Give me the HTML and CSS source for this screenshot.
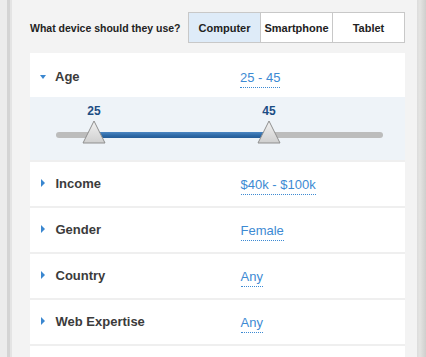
FILE: index.html
```html
<!DOCTYPE html>
<html>
<head>
<meta charset="utf-8">
<link rel="stylesheet" href="styles.css">
</head>
<body>
<div class="page">
  <div class="gutter-left"></div>
  <div class="main">
    <div class="device">
      <span class="device-label">What device should they use?</span>
      <div class="seg">
        <span class="seg-btn active">Computer</span>
        <span class="seg-btn">Smartphone</span>
        <span class="seg-btn">Tablet</span>
      </div>
    </div>
    <div class="panel">
      <div class="row open">
        <span class="caret down"></span>
        <span class="row-label">Age</span>
        <span class="row-value">25 - 45</span>
      </div>
      <div class="slider">
        <div class="track">
          <div class="fill" style="left:38px;width:175px"></div>
          <div class="handle" style="left:38px">
            <span class="handle-val">25</span>
            <svg width="24" height="24" viewBox="0 0 24 24"><defs><linearGradient id="g1" x1="0" y1="0" x2="0" y2="1"><stop offset="0" stop-color="#f2f2f2"/><stop offset="1" stop-color="#cfcfcf"/></linearGradient></defs><path d="M12 1 L23 23 L1 23 Z" fill="url(#g1)" stroke="#8f8f8f" stroke-width="1" stroke-linejoin="round"/></svg>
          </div>
          <div class="handle" style="left:213px">
            <span class="handle-val">45</span>
            <svg width="24" height="24" viewBox="0 0 24 24"><defs><linearGradient id="g2" x1="0" y1="0" x2="0" y2="1"><stop offset="0" stop-color="#f2f2f2"/><stop offset="1" stop-color="#cfcfcf"/></linearGradient></defs><path d="M12 1 L23 23 L1 23 Z" fill="url(#g2)" stroke="#8f8f8f" stroke-width="1" stroke-linejoin="round"/></svg>
          </div>
        </div>
      </div>
      <div class="row">
        <span class="caret right"></span>
        <span class="row-label">Income</span>
        <span class="row-value">$40k - $100k</span>
      </div>
      <div class="row">
        <span class="caret right"></span>
        <span class="row-label">Gender</span>
        <span class="row-value">Female</span>
      </div>
      <div class="row">
        <span class="caret right"></span>
        <span class="row-label">Country</span>
        <span class="row-value">Any</span>
      </div>
      <div class="row">
        <span class="caret right"></span>
        <span class="row-label">Web Expertise</span>
        <span class="row-value">Any</span>
      </div>
    </div>
  </div>
  <div class="gutter-right"></div>
</div>
</body>
</html>
```
FILE: styles.css
```css
* { box-sizing: border-box; }
html, body { margin: 0; padding: 0; }
body {
  font-family: "Liberation Sans", Arial, Helvetica, sans-serif;
  background: #f3f3f3;
  width: 426px;
  height: 357px;
  overflow: hidden;
}
.page {
  display: flex;
  height: 357px;
}
.gutter-left {
  width: 12px;
  flex: none;
  background: linear-gradient(to right, #ececec 0, #ececec 7px, #d4d4d4 7px, #d4d4d4 10px, #e4e4e4 10px, #e4e4e4 12px);
}
.gutter-right {
  width: 9px;
  flex: none;
  background: linear-gradient(to right, #dcdcdc 0, #e4e4e2 3px, #d9d9d7 6px, #cfcfcd 9px);
}
.main {
  flex: 1;
  background: #f3f3f3;
  padding: 12px 12px 0 18px;
  display: flex;
  flex-direction: column;
}
.device {
  display: flex;
  align-items: center;
  height: 31px;
}
.device-label {
  font-size: 10.5px;
  font-weight: bold;
  color: #222;
}
.seg {
  margin-left: auto;
  display: flex;
  height: 31px;
  border: 1px solid #c8c8c8;
  background: #fff;
}
.seg-btn {
  width: 72px;
  display: flex;
  align-items: center;
  justify-content: center;
  font-size: 11px;
  font-weight: bold;
  color: #222;
  border-left: 1px solid #c8c8c8;
}
.seg-btn:first-child { border-left: none; width: 71px; }
.seg-btn.active { background: #deebf8; }
.panel {
  margin-top: 10px;
  background: #fff;
  flex: 1;
}
.row {
  display: flex;
  align-items: center;
  height: 46px;
  padding: 0 0 2px 10px;
  border-bottom: 2px solid #efefef;
}
.row.open {
  height: 44px;
  border-bottom: none;
  padding: 3px 0 0 10px;
}
.caret {
  flex: none;
}
.caret.down {
  width: 0; height: 0;
  border-left: 3.5px solid transparent;
  border-right: 3.5px solid transparent;
  border-top: 4px solid #3a87d0;
  margin-right: 9px;
}
.caret.right {
  width: 0; height: 0;
  border-top: 4px solid transparent;
  border-bottom: 4px solid transparent;
  border-left: 4.5px solid #3a87d0;
  margin-left: 1px;
  margin-right: 10.5px;
}
.row-label {
  width: 185px;
  font-size: 13px;
  font-weight: bold;
  color: #3b3b3b;
}
.row-value {
  font-size: 13px;
  color: #3d8ad3;
  border-bottom: 1px dotted #3d8ad3;
  padding-bottom: 2px;
  margin-top: 5px;
}
.slider {
  height: 65px;
  background: #eef3f8;
  border-bottom: 2px solid #efefef;
  padding: 35px 0 0 26px;
}
.track {
  position: relative;
  width: 327px;
  height: 6px;
  border-radius: 3px;
  background: #bcbcbc;
}
.fill {
  position: absolute;
  top: 0;
  height: 6px;
  background: linear-gradient(to bottom, #4b86c2 0, #2c68a6 60%, #255c96 100%);
}
.handle {
  position: absolute;
  top: -12px;
  width: 24px;
  height: 24px;
  margin-left: -12px;
}
.handle svg { display: block; }
.handle-val {
  position: absolute;
  top: -16px;
  left: -8px;
  width: 40px;
  text-align: center;
  font-size: 12px;
  font-weight: bold;
  color: #1c4d84;
}
```
